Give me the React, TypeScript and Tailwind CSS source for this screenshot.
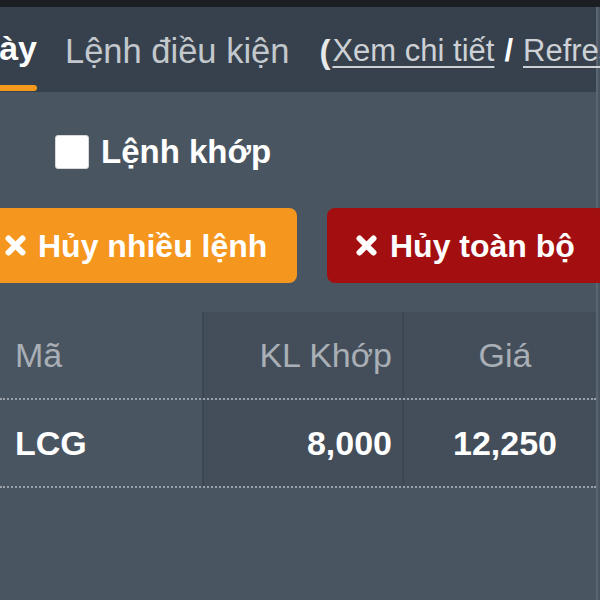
import React from "react";

function XIcon() {
  return (
    <svg width="23" height="23" viewBox="0 0 23 23" className="shrink-0">
      <path d="M4.5 4.5 L18.5 18.5 M18.5 4.5 L4.5 18.5" stroke="white" strokeWidth="6" strokeLinecap="round" />
    </svg>
  );
}

function Dotted() {
  return <div className="h-0 border-t-2 border-dotted border-[#9aa1a8]" />;
}

export default function App() {
  return (
    <div className="w-[600px] h-[600px] overflow-hidden bg-[#4a5562] font-['Liberation_Sans',Arial,sans-serif]">
      <div className="h-[7px] bg-[#1b1e22]" />
      <div className="w-[598px] border-r-2 border-[#5b6571]">
        {/* tab bar */}
        <div className="h-[85px] bg-[#36414d] flex items-stretch whitespace-nowrap text-[34px]">
          <div className="w-[37px] flex flex-col shrink-0">
            <div className="flex-1 flex items-center justify-end overflow-hidden pt-[4px]">
              <span className="font-bold text-white">Lệnh trong ngày</span>
            </div>
            <div className="h-[6px] bg-[#f39a1e] rounded-r-[3px]" />
            <div className="h-[1px]" />
          </div>
          <div className="ml-[28px] flex items-center pt-[4px] text-[#c3c8cd] text-[34.5px]">Lệnh điều kiện</div>
          <div className="ml-[30px] flex items-center pt-[4px] text-[#cdd1d5] text-[31px]">
            <span className="font-bold text-[#e6e8ea] text-[33px] mr-[2px]">(</span>
            <span className="underline decoration-2 underline-offset-[5px]">Xem chi tiết</span>
            <span className="font-bold text-white mx-[10px]">/</span>
            <span className="underline decoration-2 underline-offset-[5px]">Refresh</span>
            <span className="font-bold">)</span>
          </div>
        </div>

        {/* checkbox row */}
        <div className="mt-[43px] h-[34px] flex items-center pl-[55px] gap-[12px]">
          <div className="w-[34px] h-[34px] bg-white rounded-[3px] border border-[#d8d8d8]" />
          <span className="text-[33px] font-bold text-white">Lệnh khớp</span>
        </div>

        {/* buttons */}
        <div className="mt-[39px] flex gap-[30px] ml-[-24px] whitespace-nowrap">
          <button className="h-[75px] w-[321px] shrink-0 bg-[#f5961e] rounded-[8px] flex items-center pl-[28px] gap-[11px] text-white text-[32px] font-bold">
            <XIcon />
            <span>Hủy nhiều lệnh</span>
          </button>
          <button className="h-[75px] w-[279px] shrink-0 bg-[#a30f10] rounded-[8px] flex items-center pl-[28px] gap-[12px] text-white text-[32px] font-bold">
            <XIcon />
            <span>Hủy toàn bộ</span>
          </button>
        </div>

        {/* table */}
        <div className="mt-[29px] text-[34px] whitespace-nowrap">
          <div className="grid grid-cols-[202px_200px_194px] h-[86px]">
            <div className="flex items-center pl-[15px] text-[#a9afb5]">Mã</div>
            <div className="flex items-center justify-end pr-[10px] bg-[#434e5a] text-[#a9afb5] border-l-2 border-[#3d4752]">KL Khớp</div>
            <div className="flex items-center justify-center pl-[10px] bg-[#434e5a] text-[#a9afb5] border-l-2 border-[#3d4752]">Giá</div>
          </div>
          <Dotted />
          <div className="grid grid-cols-[202px_200px_194px] h-[86px]">
            <div className="flex items-center pl-[15px] font-bold text-white">LCG</div>
            <div className="flex items-center justify-end pr-[10px] bg-[#434e5a] font-bold text-white border-l-2 border-[#3d4752]">8,000</div>
            <div className="flex items-center justify-center pl-[10px] bg-[#434e5a] font-bold text-white border-l-2 border-[#3d4752]">12,250</div>
          </div>
          <Dotted />
        </div>
        <div className="h-[200px]" />
      </div>
    </div>
  );
}
